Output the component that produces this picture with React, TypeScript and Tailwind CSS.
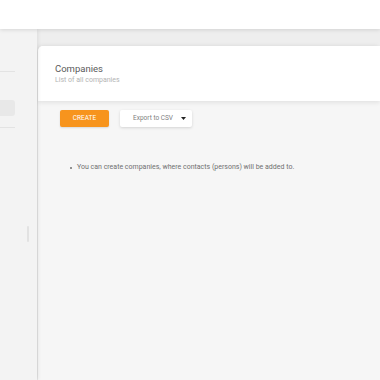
export default function App() {
  return (
    <div className="h-[380px] w-[380px] overflow-hidden bg-[#eeeeee] font-['Roboto',sans-serif] flex flex-col">
      <header className="h-[29px] shrink-0 bg-white shadow-[0_1px_4px_rgba(0,0,0,0.12)] relative z-20" />
      <div className="flex flex-1 min-h-0">
        <aside className="w-[37px] shrink-0 bg-[#f3f3f3] shadow-[1px_0_4px_rgba(0,0,0,0.08)] relative z-10 flex flex-col">
          <div className="mt-[42px] h-px w-[15px] bg-[#e3e3e3]" />
          <div className="mt-[28px] h-[16px] w-[15px] rounded-r-[3px] bg-[#e8e8e8]" />
          <div className="mt-[11px] h-px w-[15px] bg-[#e3e3e3]" />
          <div className="ml-[27px] mt-[98px] h-[16px] w-[2px] rounded-full bg-[#e2e2e2]" />
        </aside>
        <main className="flex-1 pt-[17px] pl-px">
          <div className="h-full rounded-tl-[5px] bg-[#f6f6f6] shadow-[-2px_0_5px_rgba(0,0,0,0.08)] flex flex-col">
            <div className="h-[55px] rounded-tl-[5px] bg-white px-[17px] pt-[17px] shadow-[0_2px_4px_rgba(0,0,0,0.08)]">
              <h1 className="text-[9.5px] leading-[12px] text-[#5a5a5a]">Companies</h1>
              <p className="mt-[1px] text-[7px] leading-[9px] text-[#b4b4b4]">List of all companies</p>
            </div>
            <div className="flex items-center gap-[11px] pl-[22px] pt-[9px]">
              <button className="h-[17px] w-[49px] rounded-[2px] bg-[#f7941d] text-[6.5px] text-white shadow-[0_1px_2px_rgba(0,0,0,0.12)]">
                CREATE
              </button>
              <button className="flex h-[17px] w-[72px] items-center gap-[8px] rounded-[2px] bg-white pl-[13px] text-[6.5px] text-[#808080] shadow-[0_1px_3px_rgba(0,0,0,0.14)]">
                Export to CSV
                <svg width="5" height="3" viewBox="0 0 5 3">
                  <path d="M0 0h5L2.5 3z" fill="#222" />
                </svg>
              </button>
            </div>
            <ul className="pl-[32px] pt-[36px]">
              <li className="flex items-center gap-[5px] text-[7px] leading-[9px] text-[#707070]">
                <span className="h-[2px] w-[2px] rounded-full bg-[#707070]" />
                You can create companies, where contacts (persons) will be added to.
              </li>
            </ul>
          </div>
        </main>
      </div>
    </div>
  );
}
